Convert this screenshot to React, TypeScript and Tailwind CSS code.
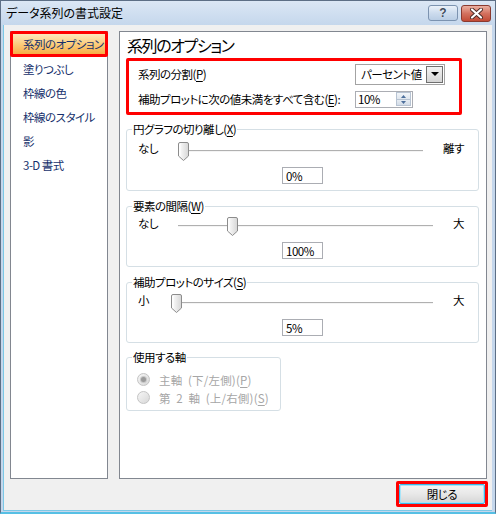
import React from "react";

const jp = "font-['Noto_Sans_CJK_JP',sans-serif] [font-feature-settings:'palt']";
const txt = "whitespace-nowrap text-[11.5px] leading-[16px] tracking-[-0.5px]";

const Key: React.FC<{ k: string }> = ({ k }) => (
  <>
    (<span className="underline underline-offset-2">{k}</span>)
  </>
);

const Thumb: React.FC<{ left: number }> = ({ left }) => (
  <svg
    width="11"
    height="19"
    viewBox="0 0 11 19"
    className="absolute top-0"
    style={{ left }}
  >
    <defs>
      <linearGradient id="thumbFill" x1="0" y1="0" x2="1" y2="0">
        <stop offset="0" stopColor="#ffffff" />
        <stop offset="1" stopColor="#d6d6d6" />
      </linearGradient>
    </defs>
    <path
      d="M2 0.5 H9 Q10.5 0.5 10.5 2 V14 L5.5 18.5 L0.5 14 V2 Q0.5 0.5 2 0.5 Z"
      fill="url(#thumbFill)"
      stroke="#8c8c8c"
    />
    <path d="M2 2 V13.5" stroke="#ffffff" />
  </svg>
);

const Slider: React.FC<{
  title: React.ReactNode;
  start: string;
  end: string;
  startW: string;
  trackW: string;
  thumb: number;
  value: string;
  box: string;
}> = ({ title, start, end, startW, trackW, thumb, value, box }) => (
  <div className={`relative ml-[6px] w-[353px] rounded-[3px] border border-[#d5dfe5] ${box}`}>
    <div className={`absolute left-[5px] top-[-9px] bg-white px-px text-black ${txt}`}>{title}</div>
    <div className="flex h-[19px] items-start pl-[11px]">
      <div className={`mt-[-2px] text-black ${txt} ${startW}`}>{start}</div>
      <div className={`relative h-[19px] ${trackW}`}>
        <div className="absolute left-0 right-0 top-[8px] h-px bg-[#b0b0b0]" />
        <div className="absolute left-0 right-0 top-[9px] h-px bg-[#f4f4f4]" />
        <Thumb left={thumb} />
      </div>
      <div className={`ml-[20px] mt-[-2px] text-black ${txt}`}>{end}</div>
    </div>
    <div className="mt-[6px] flex justify-center">
      <div className={`h-[17px] w-[41px] border border-[#abadb3] bg-white pl-[3px] text-black ${txt} leading-[15px]`}>
        {value}
      </div>
    </div>
  </div>
);

const Radio: React.FC<{ checked?: boolean; children: React.ReactNode }> = ({ checked, children }) => (
  <div className="flex h-[18px] items-center gap-[9px]">
    <div className="flex h-[13px] w-[13px] items-center justify-center rounded-full border border-[#c4c4c4] bg-gradient-to-br from-[#f6f6f6] to-[#d8d8d8]">
      {checked && <div className="h-[5px] w-[5px] rounded-full bg-[#9a9a9a] ring-1 ring-[#c8c8c8]" />}
    </div>
    <span className="whitespace-nowrap text-[11.5px] leading-[16px] tracking-[0.2px] text-[#a6a6a6]">{children}</span>
  </div>
);

const TitleBar: React.FC = () => (
  <div className="flex h-[24px] items-start justify-between bg-gradient-to-b from-[#dbe7f5] to-[#c5d7ec] pl-[5px] pr-[4px]">
    <div className="whitespace-nowrap pt-[4px] text-[12px] leading-[16px] text-black">データ系列の書式設定</div>
    <div className="mt-[4px] flex gap-[3px]">
      <div className="flex h-[16px] w-[30px] items-center justify-center rounded-[3px] border border-[#7c93b0] bg-gradient-to-b from-[#eaf1f9] via-[#cddcee] to-[#b9cde4]">
        <span className="font-['Liberation_Sans',sans-serif] text-[12px] font-bold leading-[14px] text-[#3e4b5c] [text-shadow:0_0_1px_#fff]">
          ?
        </span>
      </div>
      <div className="flex h-[17px] w-[30px] items-center justify-center rounded-[3px] border border-[#8a3a30] bg-gradient-to-b from-[#eab0a2] via-[#d3715f] to-[#c24a35]">
        <svg width="13" height="11" viewBox="0 0 13 11">
          <path d="M2 1.5 L11 9.5 M11 1.5 L2 9.5" stroke="#4a2a26" strokeWidth="4" strokeLinecap="round" />
          <path d="M2 1.5 L11 9.5 M11 1.5 L2 9.5" stroke="#ffffff" strokeWidth="2.2" strokeLinecap="round" />
        </svg>
      </div>
    </div>
  </div>
);

const navItems = ["塗りつぶし", "枠線の色", "枠線のスタイル", "影", "3-D 書式"];

const App: React.FC = () => {
  return (
    <div className={`flex h-[514px] w-[496px] flex-col border border-b-2 border-[#5d6f86] border-b-[#56bfe4] bg-[#c5d7ec] pb-px ${jp}`}>
      <TitleBar />
      <div className="mx-[2px] mr-[3px] flex h-[487px] flex-col border-b border-l border-[#7cc8e6] bg-[#f0f0f0] pl-[6px] pr-[5px] pt-[6px]">
        <div className="flex h-[448px] gap-[11px]">
          {/* left nav */}
          <div className="w-[98px] border border-[#828790] bg-white">
            <div className={`-mx-px -mt-px flex h-[26px] items-center rounded-[2px] border-[3px] border-[#ff0000] bg-gradient-to-b from-[#fde9bd] via-[#fbcd7c] to-[#f7ad45] pl-[10px] text-[#152f6b] ${txt}`}>
              系列のオプション
            </div>
            {navItems.map((item) => (
              <div key={item} className={`flex h-[24px] items-center pl-[12px] text-[#152f6b] ${txt}`}>
                {item}
              </div>
            ))}
          </div>

          {/* right panel */}
          <div className="flex-1 border border-[#828790] bg-white">
            <div className="whitespace-nowrap pl-[7px] pt-[3px] text-[16px] leading-[20px] tracking-[-1.4px] text-black">
              系列のオプション
            </div>

            <div className="ml-[6px] mt-[3px] h-[57px] w-[336px] rounded-[2px] border-[3px] border-[#ff0000] pb-[4px] pl-[9px] pr-[14px] pt-[3px]">
              <div className="flex h-[21px] items-center">
                <div className={`flex-1 text-black ${txt}`}>
                  系列の分割<Key k="P" />
                </div>
                <div className="flex h-[21px] w-[90px] items-center border border-[#a3a3a3] bg-white p-px">
                  <div className={`flex-1 pl-[4px] text-black ${txt}`}>パーセント値</div>
                  <div className="flex h-[17px] w-[17px] items-center justify-center border border-[#6f6f6f] bg-gradient-to-b from-[#f3f3f3] to-[#d5d5d5]">
                    <svg width="8" height="4" viewBox="0 0 8 4">
                      <path d="M0 0 H8 L4 4 Z" fill="#000" />
                    </svg>
                  </div>
                </div>
              </div>
              <div className="mt-[6px] flex h-[17px] items-center">
                <div className={`flex-1 text-black ${txt}`}>
                  補助プロットに次の値未満をすべて含む<Key k="E" />:
                </div>
                <div className="w-[90px]">
                  <div className="flex h-[17px] w-[58px] items-center border border-[#abadb3] bg-white">
                    <div className={`flex-1 pl-[2px] text-black ${txt} leading-[15px]`}>10%</div>
                    <div className="mr-px flex h-[14px] w-[15px] flex-col">
                      <div className="flex h-[7px] items-center justify-center border border-b-0 border-[#b7c3d2] bg-gradient-to-b from-[#f2f5f9] to-[#dfe6ee]">
                        <svg width="5" height="3" viewBox="0 0 5 3">
                          <path d="M0 3 H5 L2.5 0 Z" fill="#4d6f9c" />
                        </svg>
                      </div>
                      <div className="flex h-[7px] items-center justify-center border border-[#b7c3d2] bg-gradient-to-b from-[#e6ecf3] to-[#d3dce7]">
                        <svg width="5" height="3" viewBox="0 0 5 3">
                          <path d="M0 0 H5 L2.5 3 Z" fill="#4d6f9c" />
                        </svg>
                      </div>
                    </div>
                  </div>
                </div>
              </div>
            </div>

            <div className="mt-[14px]">
              <Slider
                box="h-[62px] pt-[12px]"
                title={<>円グラフの切り離し<Key k="X" /></>}
                start="なし"
                end="離す"
                startW="w-[40px]"
                trackW="w-[245px]"
                thumb={0}
                value="0%"
              />
            </div>
            <div className="mt-[15px]">
              <Slider
                box="h-[61px] pt-[10px]"
                title={<>要素の間隔<Key k="W" /></>}
                start="なし"
                end="大"
                startW="w-[40px]"
                trackW="w-[255px]"
                thumb={49}
                value="100%"
              />
            </div>
            <div className="mt-[15px]">
              <Slider
                box="h-[61px] pt-[11px]"
                title={<>補助プロットのサイズ<Key k="S" /></>}
                start="小"
                end="大"
                startW="w-[33px]"
                trackW="w-[262px]"
                thumb={0}
                value="5%"
              />
            </div>

            <div className="relative ml-[6px] mt-[14px] h-[54px] w-[155px] rounded-[3px] border border-[#d5dfe5] pl-[10px] pt-[13px]">
              <div className={`absolute left-[5px] top-[-9px] bg-white px-px text-black ${txt}`}>使用する軸</div>
              <Radio checked>
                主軸 &nbsp;(下/左側)<Key k="P" />
              </Radio>
              <Radio>
                第 &nbsp;2 &nbsp;軸 &nbsp;(上/右側)<Key k="S" />
              </Radio>
            </div>
          </div>
        </div>

        <div className="-mr-px mt-[2px] flex justify-end">
          <div className="h-[26px] w-[92px] rounded-[2px] border-[3px] border-[#ff0000]">
            <div className={`flex h-full items-center justify-center rounded-[2px] border border-[#3cb8e8] bg-gradient-to-b from-[#f4f4f4] via-[#e8e8e8] to-[#d6d6d6] text-black shadow-[inset_0_0_0_1px_#a8e4f8] ${txt}`}>
              閉じる
            </div>
          </div>
        </div>
      </div>
    </div>
  );
};

export default App;
